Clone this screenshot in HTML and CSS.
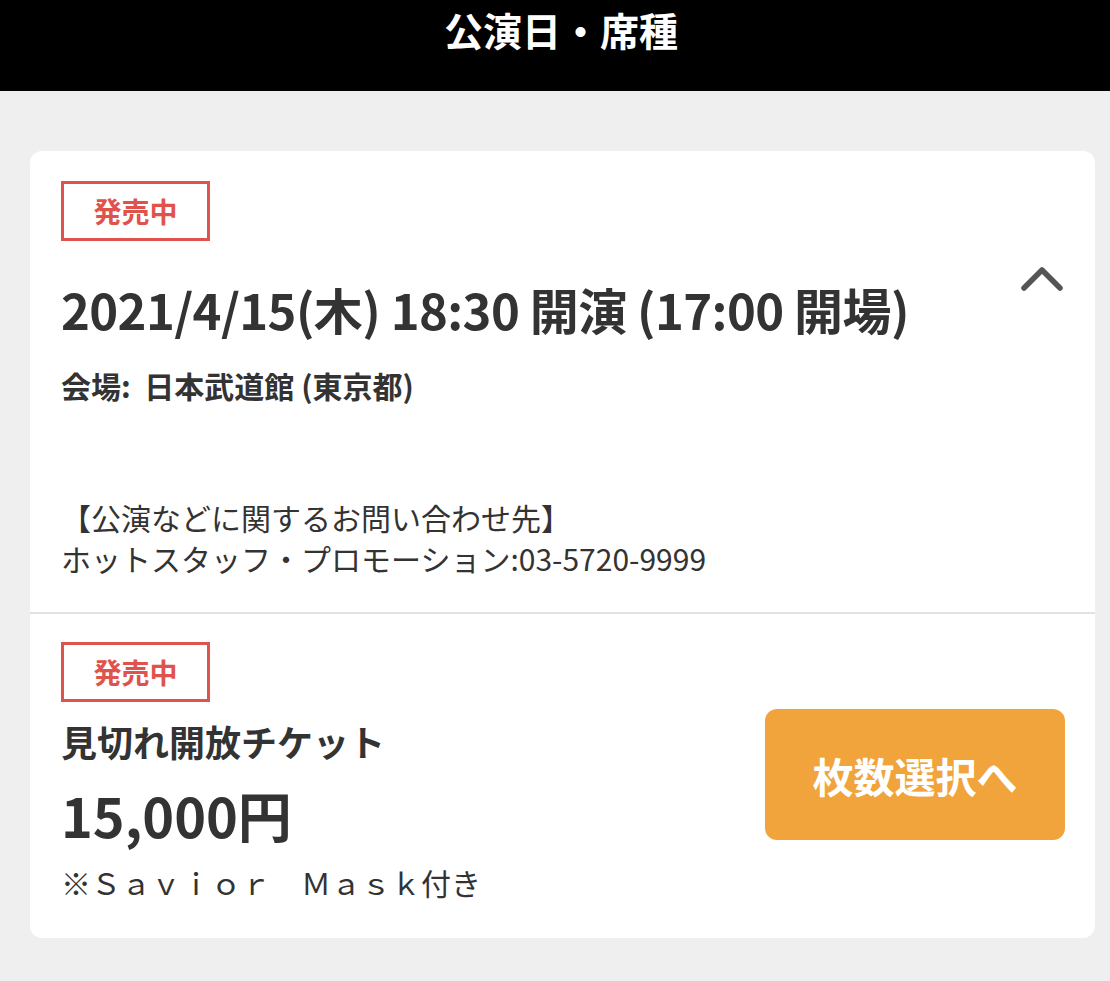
FILE: index.html
```html
<!DOCTYPE html>
<html lang="ja">
<head>
<meta charset="utf-8">
<title>公演日・席種</title>
<link rel="stylesheet" href="styles.css">
</head>
<body>
<header class="topbar">
  <h1 class="topbar-title">公演日・席種</h1>
</header>
<main class="content">
  <section class="card">
    <div class="perf">
      <div class="perf-head">
        <div class="perf-main">
          <span class="badge">発売中</span>
          <h2 class="perf-date">2021/4/15(木) 18:30 開演 (17:00 開場)</h2>
          <p class="perf-venue">会場:&nbsp;&nbsp;日本武道館 (東京都)</p>
        </div>
        <button class="toggle" aria-label="閉じる">
          <svg width="44" height="30" viewBox="0 0 44 30"><path d="M4 24 L22 6 L40 24" fill="none" stroke="#555" stroke-width="5.5" stroke-linecap="round" stroke-linejoin="round"/></svg>
        </button>
      </div>
      <p class="perf-info">【公演などに関するお問い合わせ先】<br>ホットスタッフ・プロモーション:03-5720-9999</p>
    </div>
    <div class="ticket">
      <div class="ticket-main">
        <span class="badge">発売中</span>
        <h3 class="ticket-name">見切れ開放チケット</h3>
        <p class="ticket-price">15,000円</p>
        <p class="ticket-note">※Ｓａｖｉｏｒ　Ｍａｓｋ付き</p>
      </div>
      <button class="select-btn">枚数選択へ</button>
    </div>
  </section>
</main>
</body>
</html>
```
FILE: styles.css
```css
* { box-sizing: border-box; }
html, body {
  margin: 0;
  padding: 0;
}
body {
  background: #efefef;
  font-family: "Noto Sans CJK JP", "Noto Sans", sans-serif;
  color: #333;
  width: 1110px;
  height: 981px;
  overflow: hidden;
}
.topbar {
  background: #000;
  height: 91px;
  padding-top: 6px;
}
.topbar-title {
  margin: 0;
  padding-left: 12px;
  color: #fff;
  font-size: 39px;
  font-weight: 700;
  line-height: 46px;
  text-align: center;
}
.content {
  padding: 60px 15px 0 30px;
}
.card {
  background: #fff;
  border-radius: 12px;
  height: 787px;
  display: flex;
  flex-direction: column;
}
.perf {
  padding: 30px 31px 33px 31px;
  border-bottom: 2px solid #e2e2e2;
}
.perf-head {
  display: flex;
  justify-content: space-between;
  align-items: flex-start;
}
.perf-main {
  display: flex;
  flex-direction: column;
  align-items: flex-start;
}
.badge {
  display: flex;
  align-items: center;
  justify-content: center;
  width: 149px;
  height: 60px;
  border: 3px solid #e0534c;
  color: #e0534c;
  font-size: 28px;
  font-weight: 700;
  line-height: 1;
}
.perf-date {
  margin: 38px 0 0 0;
  font-size: 49px;
  line-height: 60px;
  font-weight: 700;
  color: #333;
  letter-spacing: -0.6px;
}
.perf-venue {
  margin: 26px 0 0 0;
  font-size: 30px;
  line-height: 40px;
  font-weight: 700;
}
.toggle {
  margin: 83px 0 0 0;
  padding: 0;
  border: 0;
  background: none;
  width: 44px;
  height: 30px;
  display: block;
}
.toggle svg { display: block; }
.perf-info {
  margin: 92px 0 0 0;
  font-size: 30px;
  line-height: 41px;
  font-weight: 400;
}
.ticket {
  flex: 1;
  display: flex;
  align-items: center;
  justify-content: space-between;
  padding: 0 30px 0 31px;
}
.ticket-main {
  align-self: flex-start;
  margin-top: 28px;
  display: flex;
  flex-direction: column;
  align-items: flex-start;
}
.ticket-name {
  margin: 18px 0 0 0;
  font-size: 36px;
  line-height: 42px;
  font-weight: 700;
}
.ticket-price {
  margin: 23px 0 0 0;
  font-size: 54px;
  line-height: 60px;
  font-weight: 700;
}
.ticket-note {
  margin: 17px 0 0 0;
  font-size: 30px;
  line-height: 40px;
  font-weight: 400;
}
.select-btn {
  width: 300px;
  height: 131px;
  border: 0;
  border-radius: 12px;
  background: #f0a43b;
  color: #fff;
  font-family: inherit;
  font-size: 41px;
  font-weight: 700;
  margin-top: -3px;
}
```
